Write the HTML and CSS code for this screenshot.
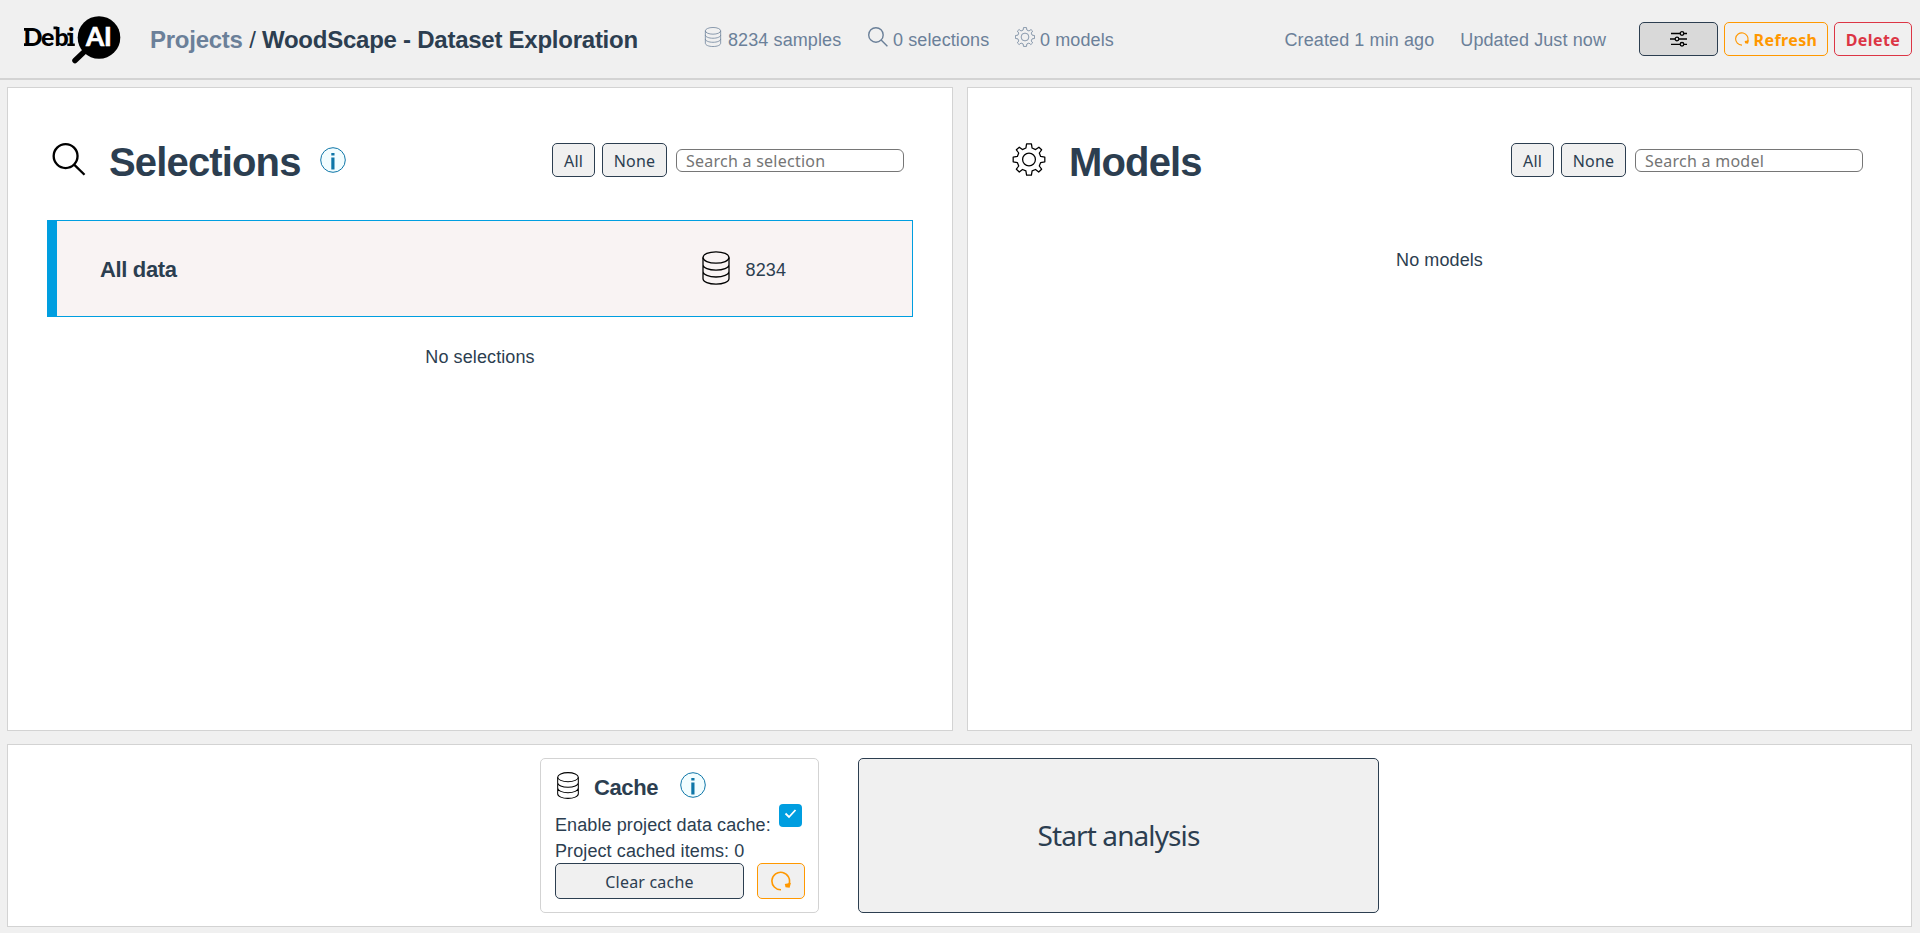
FILE: index.html
```html
<!DOCTYPE html>
<html lang="en">
<head>
<meta charset="utf-8">
<title>DebiAI</title>
<link rel="stylesheet" href="styles.css">
</head>
<body>
<svg class="defs" width="0" height="0">
  <symbol id="data" viewBox="0 0 28 34"><g fill="none" stroke="currentColor" stroke-width="1.3"><ellipse cx="14" cy="6.500" rx="13" ry="5.700"/><path d="M1 6.500V27.500C1 31 7 33.200 14 33.200S27 31 27 27.500V6.500M1 13.500c0 3.400 6 5.600 13 5.600s13-2.200 13-5.600M1 20.300c0 3.400 6 5.700 13 5.700s13-2.300 13-5.700"/></g></symbol>
  <symbol id="search" viewBox="0 0 34 34"><g fill="none" stroke="currentColor" stroke-width="2.400"><circle cx="13.500" cy="13.500" r="12.300"/><path d="M22.300 22.300L33 32.700"/></g></symbol>
  <symbol id="gear" viewBox="0 0 34 34"><g fill="none" stroke="currentColor" stroke-width="1.300" stroke-linejoin="round"><circle cx="17" cy="17" r="6.600"/><path d="M14.500 1H19.500L20.200 5.200L23.800 6.800L27.200 4.300L30 7L27.600 10.300L29 13.800L33.300 14.600V19.400L29 20.200L27.600 23.700L30 27L27 29.900L23.700 27.300L20.200 28.800L19.500 33H14.500L13.800 28.800L10.300 27.300L7 29.900L4 27L6.400 23.700L5 20.200L.7 19.400V14.600L5 13.800L6.400 10.300L4 7L7 4.300L10.200 6.800L13.800 5.200Z"/></g></symbol>
  <symbol id="reload" viewBox="0 0 20 20"><path d="M10 18.800A8.800 8.800 0 1 1 18 13" fill="none" stroke="currentColor" stroke-width="1.600"/><path d="M13.800 13L20 11.800L18.600 16.800L14.500 16.200Z" fill="currentColor"/></symbol>
  <symbol id="info" viewBox="0 0 26 26"><circle cx="13" cy="13" r="12.300" fill="#f2fdff" stroke="#0e76a8" stroke-width="1"/><path d="M11.300 6h3.200v2.500h-3.200zM11.300 10.500h3.200V22.500h-3.200z" fill="#0e76a8"/></symbol>
</svg>

<header class="header">
  <svg class="logo" viewBox="0 0 98 50" width="98" height="50">
    <text class="logo-debi" x="0.500 18 31.500 45" y="31">Debi</text>
    <path d="M1 13h5v2.800h-5zM1 28.200h5V31h-5zM30.500 11.500h4v2.800h-4zM44.300 17.800h4v2.800h-4zM44.300 28.400h7.500V31h-7.500z"/>
    <path d="M62 36L52 45.500" stroke="#000" stroke-width="5.500" stroke-linecap="round"/>
    <circle cx="76" cy="22.500" r="21.300" fill="#000"/>
    <text class="logo-ai" x="63" y="31">AI</text>
  </svg>
  <h1 class="crumbs"><span class="link">Projects</span> <span class="slash">/</span> <span class="name">WoodScape - Dataset Exploration</span></h1>
  <div class="stats">
    <span class="stat samples"><svg width="18" height="20"><use href="#data"/></svg><span>8234 samples</span></span>
    <span class="stat sel"><svg width="20" height="20"><use href="#search"/></svg><span>0 selections</span></span>
    <span class="stat mod"><svg width="20" height="20"><use href="#gear"/></svg><span>0 models</span></span>
  </div>
  <div class="dates"><span>Created 1 min ago</span><span>Updated Just now</span></div>
  <div class="actions">
    <button class="btn settings"><svg width="18" height="16" viewBox="0 0 18 16"><g fill="none" stroke="#000" stroke-width="1.300"><path d="M1 2.500h9M14 2.500h3M0 8h5M9 8h8M1 13.300h9M14 13.300h3"/><circle cx="12" cy="2.500" r="1.800"/><circle cx="7" cy="8" r="1.800"/><circle cx="12" cy="13.300" r="1.800"/></g></svg></button>
    <button class="btn refresh"><svg width="14" height="14"><use href="#reload"/></svg><span>Refresh</span></button>
    <button class="btn delete"><span>Delete</span></button>
  </div>
</header>

<main class="page">
  <section class="panel list">
    <div class="title">
      <svg width="34" height="33"><use href="#search"/></svg>
      <h2 class="t-sel">Selections</h2>
      <svg class="info" width="26" height="26"><use href="#info"/></svg>
      <div class="filters"><button class="btn all">All</button><button class="btn none">None</button><input class="search" placeholder="Search a selection"></div>
    </div>
    <div class="row"><span class="row-name">All data</span><span class="row-count"><svg width="28" height="34"><use href="#data"/></svg><span>8234</span></span></div>
    <p class="empty">No selections</p>
  </section>
  <section class="panel list models">
    <div class="title">
      <svg width="34" height="33"><use href="#gear"/></svg>
      <h2 class="t-mod">Models</h2>
      <div class="filters"><button class="btn all">All</button><button class="btn none">None</button><input class="search" placeholder="Search a model"></div>
    </div>
    <p class="empty">No models</p>
  </section>
  <section class="panel bottom">
    <div class="cache">
      <div class="cache-title"><svg width="24" height="27"><use href="#data"/></svg><h3>Cache</h3><svg class="cache-info" width="26" height="26"><use href="#info"/></svg></div>
      <div class="enable"><span>Enable project data cache:</span><span class="check"><svg width="13" height="10" viewBox="0 0 13 10"><path d="M1.500 4.500L5 8L11.500 1" fill="none" stroke="#fff" stroke-width="1.800"/></svg></span></div>
      <div class="items">Project cached items: 0</div>
      <div class="cache-actions"><button class="btn clear">Clear cache</button><button class="btn again"><svg width="20" height="20"><use href="#reload"/></svg></button></div>
    </div>
    <button class="btn start">Start analysis</button>
  </section>
</main>
</body>
</html>
```

FILE: styles.css
```css
* { box-sizing: border-box; }
body { margin: 0; height: 933px; overflow: hidden; background: #f0f0f0; color: #2c3e50; font-family: "Liberation Sans", Arial, sans-serif; font-size: 18px; letter-spacing: .1px; }
h1, h2, h3, p { margin: 0; }
svg { flex: none; display: block; }
.defs { display: none; }
span, h1, h2, h3 { white-space: nowrap; }

.header { display: flex; align-items: center; height: 80px; padding: 2px 8px 2px 23px; border-bottom: 2px solid #d3d3d3; }
.logo { margin-top: 2px; letter-spacing: 0; }
.logo-debi { font: 900 25px "Lato", sans-serif; }
.logo-ai { font: bold 26px "Lato", sans-serif; fill: #fff; stroke: #fff; stroke-width: .7px; }
.crumbs { width: 488px; margin-left: 29px; padding-top: 2px; font-size: 24px; letter-spacing: -.25px; }
.crumbs .link { color: #6b8099; }
.crumbs .slash { font-weight: 400; }
.stats, .dates { display: flex; color: #6b8099; }
.stats { margin-left: 66px; }
.stat { display: flex; align-items: flex-start; height: 24px; }
.stat > span { padding-top: 3px; }
.samples { width: 164px; gap: 6px; }
.sel { width: 147px; gap: 5px; }
.mod { gap: 5px; }
.dates { margin-left: auto; gap: 26px; padding-top: 2px; }
.actions { display: flex; gap: 6px; margin-left: 33px; }

.btn { display: flex; align-items: center; justify-content: center; height: 34px; padding: 0; border: 1px solid #2c3e50; border-radius: 5px; background: #f0f0f0; color: #2c3e50; font-family: "Noto Sans", sans-serif; font-size: 16px; letter-spacing: .2px; }
.settings { width: 79px; background: #d9d9d9; }
.refresh { width: 104px; gap: 5px; border-color: #ff9800; color: #ff9800; }
.delete { width: 78px; border-color: #dc3545; color: #dc3545; }
.refresh, .delete { font-weight: 700; letter-spacing: .4px; }
.refresh span, .delete span { padding-top: 2px; }

.page { display: grid; grid-template-columns: 946px 945px; grid-template-rows: 644px 183px; gap: 13px 14px; padding: 7px 0 0 7px; }
.panel { border: 1px solid #d3d3d3; background: #fff; }
.list { padding: 39px 39px 0; }
.title { display: flex; align-items: center; height: 66px; padding: 0 9px 0 5px; color: #000; }
.title > svg { margin-top: -1px; }
.title h2 { margin-left: 23px; padding-top: 4px; color: #2c3e50; font-size: 40px; letter-spacing: -.85px; }
.title .info { margin: 0 0 0 19px; }
.filters { display: flex; align-items: center; margin-left: auto; }
.all { width: 43px; margin-right: 7px; padding-top: 2px; }
.none { width: 65px; margin-right: 9px; padding-top: 2px; }
.search { width: 228px; height: 23px; padding: 1px 9px 0; border: 1px solid #767676; border-radius: 6px; background: #fff; font-family: "Noto Sans", sans-serif; font-size: 16px; letter-spacing: .25px; }
.search::placeholder { color: #757575; }
.row { display: flex; align-items: center; height: 97px; margin-top: 27px; padding: 0 126px 0 43px; border: 1px solid #009ee0; border-left-width: 10px; background: #f9f3f3; }
.row-name { padding-top: 2px; font-size: 22px; font-weight: 700; letter-spacing: -.35px; }
.row-count { display: flex; align-items: center; gap: 16px; margin-left: auto; }
.row-count svg { color: #000; margin-top: -1px; }
.row-count span { padding-top: 3px; }
.empty { margin-top: 30px; text-align: center; line-height: 20px; }
.models .empty { margin-top: 57px; }

.bottom { grid-column: span 2; display: flex; justify-content: center; gap: 39px; padding-top: 13px; }
.cache { width: 279px; height: 155px; padding: 13px 13px 0 14px; border: 1px solid #d3d3d3; border-radius: 5px; }
.cache-title { display: flex; align-items: center; height: 27px; padding-left: 1px; color: #000; }
.cache-title h3 { width: 86px; margin-left: 14px; padding-top: 4px; color: #2c3e50; font-size: 22px; letter-spacing: -.4px; }
.cache-info { margin-top: -2px; }
.enable { display: flex; height: 38px; }
.enable > span:first-child { width: 224px; padding-top: 16px; }
.check { display: flex; justify-content: center; width: 23px; height: 23px; margin-top: 5px; padding-top: 5px; border-radius: 4px; background: #009ee0; }
.items { height: 26px; padding-top: 4px; line-height: 20px; }
.cache-actions { display: flex; gap: 13px; }
.clear { width: 189px; height: 36px; padding-top: 2px; }
.again { width: 48px; height: 36px; border-color: #ff9800; color: #ff9800; }
.start { width: 521px; height: 155px; padding-bottom: 2px; font-size: 28px; letter-spacing: -.9px; }
```
